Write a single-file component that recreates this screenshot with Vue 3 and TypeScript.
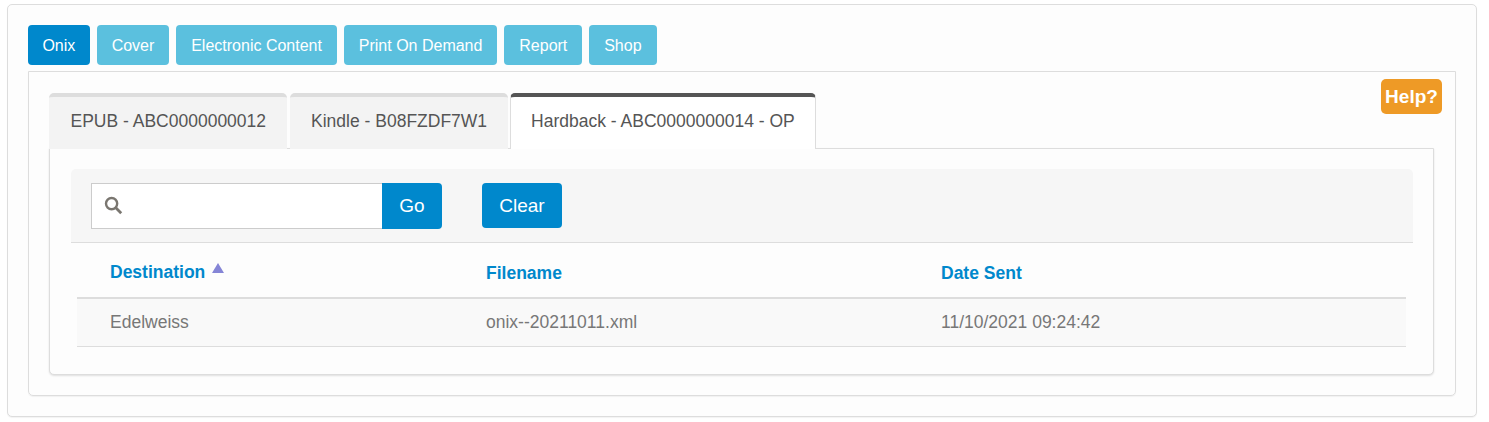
<script setup lang="ts">
import { ref } from 'vue'

const sections = ['Onix', 'Cover', 'Electronic Content', 'Print On Demand', 'Report', 'Shop']
const activeSection = ref('Onix')

const products = ['EPUB - ABC0000000012', 'Kindle - B08FZDF7W1', 'Hardback - ABC0000000014 - OP']
const activeProduct = ref(products[2])

const search = ref('')

const rows = [{ destination: 'Edelweiss', filename: 'onix--20211011.xml', sent: '11/10/2021 09:24:42' }]
</script>

<template>
  <div class="page">
    <div class="outer">
      <div class="section-nav">
        <button
          v-for="s in sections"
          :key="s"
          class="section-btn"
          :class="{ active: s === activeSection }"
          @click="activeSection = s"
        >
          {{ s }}
        </button>
      </div>

      <div class="inner">
        <a class="help" href="#">Help?</a>

        <div class="tabs">
          <div
            v-for="p in products"
            :key="p"
            class="tab"
            :class="{ active: p === activeProduct }"
            @click="activeProduct = p"
          >
            {{ p }}
          </div>
        </div>

        <div class="panel">
          <div class="filter">
            <div class="search">
              <svg class="search-icon" width="19" height="19" viewBox="0 0 19 19">
                <circle cx="7.6" cy="7.6" r="5.6" fill="none" stroke="#7a7670" stroke-width="2.4" />
                <path d="M11.8 11.8 L17.2 17.2" stroke="#7a7670" stroke-width="2.8" />
              </svg>
              <input v-model="search" type="text" />
              <button class="go">Go</button>
            </div>
            <button class="clear">Clear</button>
          </div>

          <table class="grid">
            <colgroup>
              <col class="col-dest" />
              <col class="col-file" />
              <col />
            </colgroup>
            <thead>
              <tr>
                <th>
                  <span class="sorted">Destination</span>
                  <svg class="sort" width="12" height="10" viewBox="0 0 12 10">
                    <path d="M6 0 L12 10 L0 10 Z" fill="#8585d6" />
                  </svg>
                </th>
                <th>Filename</th>
                <th>Date Sent</th>
              </tr>
            </thead>
            <tbody>
              <tr v-for="r in rows" :key="r.filename">
                <td>{{ r.destination }}</td>
                <td>{{ r.filename }}</td>
                <td>{{ r.sent }}</td>
              </tr>
            </tbody>
          </table>
        </div>
      </div>
    </div>
  </div>
</template>

<style>
html,
body {
  margin: 0;
  background: #fff;
}
</style>

<style scoped>
.page {
  padding: 4px 12px 5px 7px;
  font-family: 'Liberation Sans', Arial, sans-serif;
}

.outer {
  box-sizing: border-box;
  height: 413px;
  padding: 20px;
  background: #fdfdfd;
  border: 1px solid #ddd;
  border-radius: 5px;
  box-shadow: 0 1px 1px rgba(0, 0, 0, 0.05);
}

.section-nav {
  display: flex;
  gap: 7px;
  height: 40px;
  margin-bottom: 6px;
}

.section-btn {
  height: 40px;
  padding: 1px 14.95px 0;
  border: none;
  border-radius: 4px;
  background: #5bc0de;
  color: #fff;
  font: 16px 'Liberation Sans', Arial, sans-serif;
  cursor: pointer;
}

.section-btn.active {
  padding: 1px 14.4px 0;
  background: #0088cc;
}

.inner {
  position: relative;
  box-sizing: border-box;
  height: 325px;
  padding: 21px 21px 20px 20px;
  border: 1px solid #ddd;
  border-radius: 0 0 5px 5px;
  box-shadow: 0 1px 1px rgba(0, 0, 0, 0.05);
}

.help {
  position: absolute;
  top: 7px;
  right: 13px;
  width: 61px;
  height: 35px;
  line-height: 35px;
  text-align: center;
  background: #ee9a26;
  border-radius: 5px;
  color: #fff;
  font-size: 19px;
  font-weight: bold;
  text-decoration: none;
}

.tabs {
  display: flex;
  gap: 3px;
  position: relative;
  z-index: 1;
  height: 56px;
  margin-bottom: -1px;
}

.tab {
  box-sizing: border-box;
  height: 56px;
  padding: 0 20.5px 0 21.5px;
  line-height: 49px;
  font-size: 17.5px;
  color: #555;
  background: #f3f3f3;
  border-top: 4px solid #ddd;
  border-radius: 5px 5px 0 0;
}

.tab.active {
  margin-left: -1px;
  padding: 0 20.5px;
  background: #fff;
  border-top-color: #555;
  border-left: 1px solid #ddd;
  border-right: 1px solid #ddd;
}

.panel {
  box-sizing: border-box;
  height: 227px;
  padding: 20px 20px 0 21px;
  background: #fdfdfd;
  border: 1px solid #ddd;
  border-radius: 0 0 5px 5px;
  box-shadow: 0 1px 2px rgba(0, 0, 0, 0.12);
}

.filter {
  box-sizing: border-box;
  display: flex;
  gap: 40px;
  align-items: flex-start;
  height: 74px;
  padding: 14px 20px 0;
  background: #f6f6f6;
  border-bottom: 1px solid #ddd;
  border-radius: 5px 5px 0 0;
}

.search {
  position: relative;
  display: flex;
  height: 46px;
}

.search-icon {
  position: absolute;
  left: 13px;
  top: 13px;
}

.search input {
  box-sizing: border-box;
  width: 291px;
  height: 46px;
  padding: 0 12px 0 40px;
  border: 1px solid #ccc;
  border-right: none;
  background: #fff;
  outline: none;
  font-size: 18px;
}

.go,
.clear {
  border: none;
  background: #0088cc;
  color: #fff;
  font: 19px 'Liberation Sans', Arial, sans-serif;
  cursor: pointer;
}

.go {
  width: 60px;
  height: 46px;
  border-radius: 0 4px 4px 0;
}

.clear {
  width: 80px;
  height: 45px;
  border-radius: 4px;
}

.grid {
  width: 1329px;
  margin-left: 6px;
  table-layout: fixed;
  border-collapse: collapse;
  font-size: 17.5px;
}

.col-dest {
  width: 376px;
}

.col-file {
  width: 455px;
}

.grid th {
  height: 55px;
  padding: 7px 0 0 33px;
  box-sizing: border-box;
  text-align: left;
  color: #0088cc;
  font-weight: bold;
  border-bottom: 2px solid #ddd;
}

.grid th:first-child .sorted,
.grid th:first-child .sort {
  position: relative;
  top: -1px;
}

.sort {
  margin-left: 7px;
  vertical-align: 5px;
}

.grid td {
  height: 47px;
  padding: 0 0 0 33px;
  background: #f9f9f9;
  color: #777;
  border-bottom: 1px solid #ddd;
}
</style>
